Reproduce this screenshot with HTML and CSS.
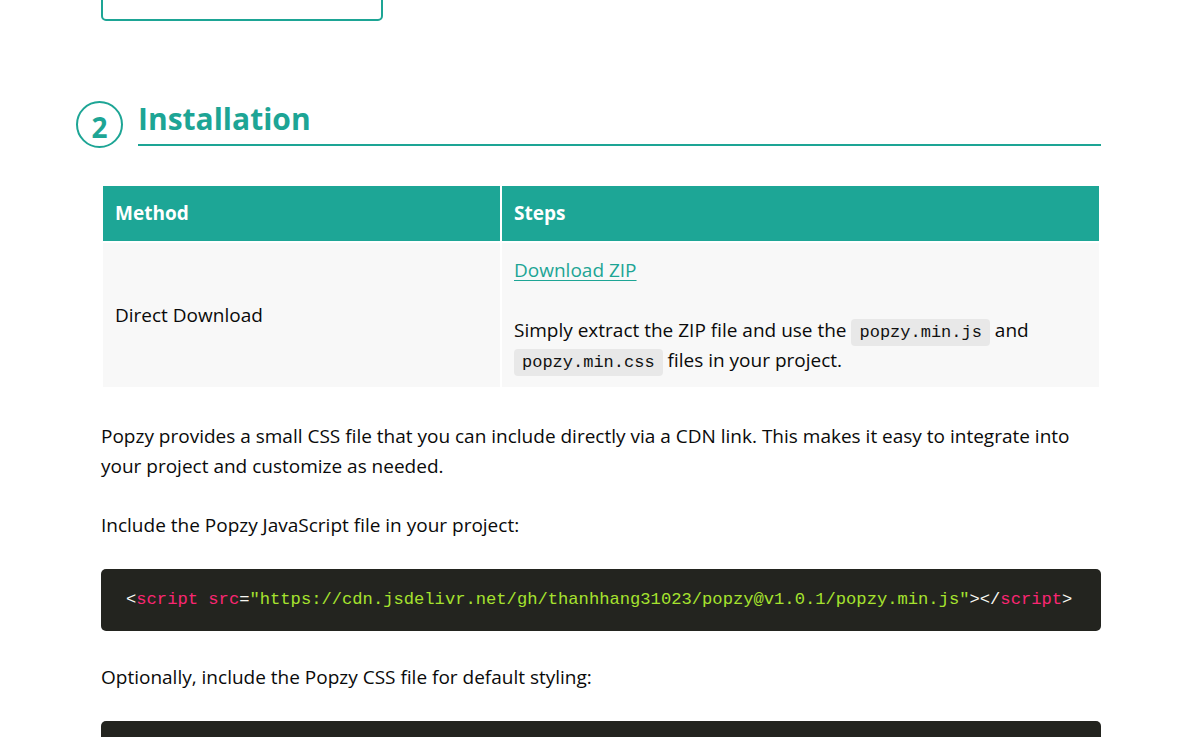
FILE: index.html
```html
<!DOCTYPE html>
<html lang="en">
<head>
<meta charset="utf-8">
<title>Popzy - Installation</title>
<link rel="stylesheet" href="styles.css">
</head>
<body>
<main class="container">
  <div class="prev-box"></div>

  <section class="section">
    <div class="section-head">
      <span class="step-num">2</span>
      <h2 class="section-title">Installation</h2>
    </div>

    <table class="install-table">
      <thead>
        <tr>
          <th class="col-method">Method</th>
          <th>Steps</th>
        </tr>
      </thead>
      <tbody>
        <tr>
          <td>Direct Download</td>
          <td>
            <a class="link" href="#">Download ZIP</a>
            <p class="cell-p">Simply extract the ZIP file and use the <code class="inline-code">popzy.min.js</code> and <code class="inline-code">popzy.min.css</code> files in your project.</p>
          </td>
        </tr>
      </tbody>
    </table>

    <p class="text text-first">Popzy provides a small CSS file that you can include directly via a CDN link. This makes it easy to integrate into your project and customize as needed.</p>
    <p class="text">Include the Popzy JavaScript file in your project:</p>
    <pre class="code"><code><span class="pun">&lt;</span><span class="tag">script</span> <span class="attr">src</span><span class="pun">=</span><span class="str">"https://cdn.jsdelivr.net/gh/thanhhang31023/popzy@v1.0.1/popzy.min.js"</span><span class="pun">&gt;&lt;/</span><span class="tag">script</span><span class="pun">&gt;</span></code></pre>
    <p class="text text-after-code">Optionally, include the Popzy CSS file for default styling:</p>
    <pre class="code"><code><span class="pun">&lt;</span><span class="tag">link</span> <span class="attr">rel</span><span class="pun">=</span><span class="str">"stylesheet"</span> <span class="attr">href</span><span class="pun">=</span><span class="str">"https://cdn.jsdelivr.net/gh/thanhhang31023/popzy@v1.0.1/popzy.min.css"</span> <span class="pun">/&gt;</span></code></pre>
  </section>
</main>
</body>
</html>
```

FILE: styles.css
```css
* { box-sizing: border-box; }

html, body {
  margin: 0;
  padding: 0;
  background: #fff;
  overflow: hidden;
}

body {
  font-family: "Open Sans", "Noto Sans", sans-serif;
  font-size: 19px;
  line-height: 30px;
  color: #0a0a0a;
}

.container {
  width: 1000px;
  margin: 0 auto;
}

.prev-box {
  width: 282px;
  height: 60px;
  margin-top: -39px;
  border: 2px solid #1da595;
  border-radius: 5px;
}

.section-head {
  display: flex;
  align-items: center;
  gap: 15px;
  margin: 80px 0 36px -25px;
}

.step-num {
  flex: none;
  width: 47px;
  height: 47px;
  border: 2px solid #1da595;
  border-radius: 50%;
  display: flex;
  align-items: center;
  justify-content: center;
  color: #1da595;
  font-size: 28px;
  font-weight: 700;
  line-height: 1;
  padding-top: 4px;
}

.section-title {
  flex: 1;
  margin: 0;
  color: #1da595;
  font-size: 30px;
  font-weight: 700;
  line-height: 32px;
  padding-bottom: 9px;
  border-bottom: 2px solid #1da595;
}

.install-table {
  width: 100%;
  border-collapse: separate;
  border-spacing: 2px;
  margin-bottom: 32px;
}

.install-table th {
  background: #1da696;
  color: #fff;
  text-align: left;
  font-weight: 700;
  line-height: 27px;
  padding: 14px 12px;
}

.install-table .col-method { width: 397px; }

.install-table td {
  background: #f8f8f8;
  padding: 12px 12px;
  vertical-align: middle;
}

.link {
  color: #1da595;
  text-decoration: underline;
  text-underline-offset: 3px;
}

.cell-p {
  margin: 30px 0 0;
}

.inline-code {
  font-family: "Liberation Mono", "DejaVu Sans Mono", monospace;
  font-size: 17px;
  line-height: 1;
  background: #e8e8e8;
  border-radius: 4px;
  padding: 4px 8px;
  color: #111;
}

.text {
  margin: 0 0 29px;
}

.text-after-code { margin-bottom: 29px; }

.code {
  margin: 0 0 31px;
  background: #23241f;
  border-radius: 5px;
  padding: 20px 25px;
  font-family: "Liberation Mono", "DejaVu Sans Mono", monospace;
  font-size: 17.15px;
  line-height: 22px;
  color: #f8f8f2;
  overflow: hidden;
}

.code code {
  display: block;
  font: inherit;
}

.code .tag { color: #f92672; }
.code .attr { color: #f92672; }
.code .str { color: #a6e22e; }
.code .pun { color: #f8f8f2; }
```
